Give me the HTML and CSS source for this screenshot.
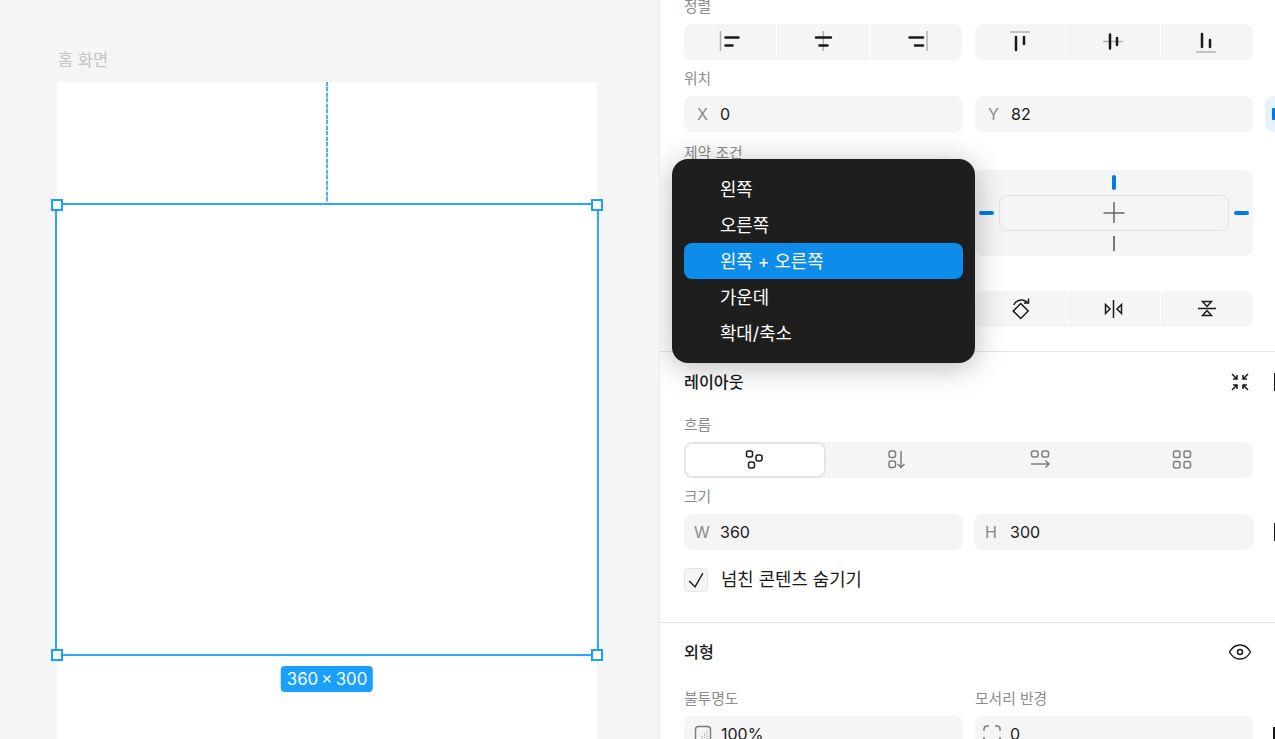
FILE: index.html
```html
<!DOCTYPE html>
<html lang="ko">
<head>
    <meta charset="utf-8">
    <title>홈 화면</title>
    <link rel="stylesheet" href="styles.css">
</head>
<body>
    <div class="canvas">
        <div class="frame-name">홈 화면</div>
        <div class="frame">
            <div class="guide"></div>
            <div class="selection">
                <span class="handle tl"></span>
                <span class="handle tr"></span>
                <span class="handle bl"></span>
                <span class="handle br"></span>
                <div class="size-badge">360 × 300</div>
            </div>
        </div>
    </div>

    <div class="panel">
        <div class="section first">
            <div class="label">정렬</div>
            <div class="align-row">
                <div class="seg-group">
                    <div class="seg"><svg class="ico" viewBox="0 0 24 24"><path class="thin" d="M2.5 1v20"/><path class="bar" d="M7.5 7.5h13M7.5 15.5h7"/></svg></div>
                    <div class="seg"><svg class="ico" viewBox="0 0 24 24"><path class="thin" d="M12.3 1v20"/><path class="bar" d="M5 7.5h15M8.5 15.5h8"/></svg></div>
                    <div class="seg"><svg class="ico" viewBox="0 0 24 24"><path class="thin" d="M23 1v20"/><path class="bar" d="M5.5 7.5h13.500M11 15.500h8"/></svg></div>
                </div>
                <div class="seg-group">
                    <div class="seg"><svg class="ico" viewBox="0 0 24 24"><path class="thin" d="M1 2h20"/><path class="bar" d="M7 7v13M15 7v7"/></svg></div>
                    <div class="seg"><svg class="ico" viewBox="0 0 24 24"><path class="thin" d="M1 11.500h20"/><path class="bar" d="M8 4.500v14M15 8v7"/></svg></div>
                    <div class="seg"><svg class="ico" viewBox="0 0 24 24"><path class="thin" d="M1 22h20"/><path class="bar" d="M7 4v13M15 10v7"/></svg></div>
                </div>
            </div>

            <div class="label">위치</div>
            <div class="field-row">
                <div class="field"><span class="axis">X</span><span>0</span></div>
                <div class="field"><span class="axis">Y</span><span>82</span></div>
                <div class="lock-btn"><span class="lock-mark"></span></div>
            </div>

            <div class="label constraint-label">제약 조건</div>
            <div class="constraint-row">
                <div class="constraint"></div>
                <div class="constraint">
                    <span class="tick top"></span>
                    <span class="tick left"></span>
                    <div class="constraint-box">
                        <svg class="plus" viewBox="0 0 22 22"><path d="M11 0v21M0.500 11h21"/></svg>
                    </div>
                    <span class="tick right"></span>
                    <span class="tick bottom"></span>
                </div>
            </div>

            <div class="label transform-label">변형</div>
            <div class="align-row">
                <div class="seg-group">
                    <div class="seg"></div>
                    <div class="seg"></div>
                    <div class="seg"></div>
                </div>
                <div class="seg-group">
                    <div class="seg"><svg class="ico" viewBox="0 0 24 24"><path class="line" d="M11.700 6.500l7.500 7.500-7.500 7.500-7.500-7.500z"/><path class="line" d="M4.800 8C6.500 3.500 14 .5 19 6M19.500 1.500V6H15"/></svg></div>
                    <div class="seg"><svg class="ico" viewBox="0 0 24 24"><path class="line" d="M11.500 3v18"/><path class="line" d="M3.500 7.500v9l4.500-4.500zM19.500 7.500v9l-4.500-4.500z"/></svg></div>
                    <div class="seg"><svg class="ico" viewBox="0 0 24 24"><path class="line" d="M3 11.500h18"/><path class="line" d="M7.500 4.500h9l-4.500 5zM7.500 18.500h9l-4.500-5z"/></svg></div>
                </div>
            </div>
        </div>

        <div class="section layout">
            <div class="section-head">
                <span class="section-title">레이아웃</span>
                <svg class="head-ico" viewBox="0 0 20 20"><path class="line" d="M2 2l5 5M7 3v4h-4M18 2l-5 5M13 3v4h4M2 18l5-5M7 17v-4h-4M18 18l-5-5M13 17v-4h4"/></svg>
                <span class="edge-mark"></span>
            </div>
            <div class="label">흐름</div>
            <div class="flow-tabs">
                <div class="flow-tab active">
                    <svg class="ico" viewBox="0 0 24 24"><g class="line"><rect x="3.500" y="3" width="6" height="6" rx="2"/><rect x="13" y="7" width="6" height="6" rx="2"/><rect x="5.500" y="14" width="6" height="6" rx="2"/></g></svg>
                </div>
                <div class="flow-tab">
                    <svg class="ico" viewBox="0 0 24 24"><g class="line grey"><rect x="4" y="3" width="6.500" height="6.500" rx="2"/><rect x="4" y="13" width="6.500" height="6.500" rx="2"/><path d="M16 3v16.500M12.500 16l3.500 3.500 3.500-3.500"/></g></svg>
                </div>
                <div class="flow-tab">
                    <svg class="ico" viewBox="0 0 24 24"><g class="line grey"><rect x="3.500" y="3" width="6.500" height="6" rx="2"/><rect x="14" y="3" width="6.500" height="6" rx="2"/><path d="M3 16h18M17.500 12.500l3.500 3.500-3.500 3.500"/></g></svg>
                </div>
                <div class="flow-tab">
                    <svg class="ico" viewBox="0 0 24 24"><g class="line grey"><rect x="3.500" y="3" width="6.500" height="6.500" rx="2"/><rect x="14" y="3" width="6.500" height="6.500" rx="2"/><rect x="3.500" y="13.500" width="6.500" height="6.500" rx="2"/><rect x="14" y="13.500" width="6.500" height="6.500" rx="2"/></g></svg>
                </div>
            </div>

            <div class="label">크기</div>
            <div class="field-row size-row">
                <div class="field"><span class="axis wide">W</span><span>360</span></div>
                <div class="field"><span class="axis height">H</span><span>300</span></div>
                <span class="edge-mark"></span>
            </div>

            <div class="check-row">
                <span class="checkbox"><svg viewBox="0 0 24 24"><path class="check" d="M4.500 13l6.500 6.500 8.500-15"/></svg></span>
                <span class="check-text">넘친 콘텐츠 숨기기</span>
            </div>
        </div>

        <div class="section look">
            <div class="section-head">
                <span class="section-title">외형</span>
                <svg class="head-ico eye" viewBox="0 0 24 24"><path class="line" d="M1.500 12c2.500-4.500 6-7 10.500-7s8 2.500 10.500 7c-2.500 4.500-6 7-10.500 7s-8-2.500-10.500-7z"/><circle class="line" cx="12" cy="12" r="2.500"/></svg>
            </div>
            <div class="look-labels">
                <div class="label">불투명도</div>
                <div class="label">모서리 반경</div>
            </div>
            <div class="field-row">
                <div class="field">
                    <svg class="field-ico" viewBox="0 0 18 18"><rect class="line grey" x="1.500" y="1.500" width="15" height="15" rx="3"/><path class="dots" d="M13 5v9M10.500 8v6M8 11v3"/></svg>
                    <span>100%</span>
                </div>
                <div class="field">
                    <svg class="field-ico corner" viewBox="0 0 18 18"><path class="line grey" d="M1 6V4a3 3 0 0 1 3-3h2M12 1h2a3 3 0 0 1 3 3v2M17 12v2a3 3 0 0 1-3 3h-2M6 17H4a3 3 0 0 1-3-3v-2"/></svg>
                    <span>0</span>
                </div>
                <span class="edge-mark"></span>
            </div>
        </div>

        <div class="menu">
            <div class="menu-item">왼쪽</div>
            <div class="menu-item">오른쪽</div>
            <div class="menu-item selected">왼쪽 + 오른쪽</div>
            <div class="menu-item">가운데</div>
            <div class="menu-item">확대/축소</div>
        </div>
    </div>
</body>
</html>
```

FILE: styles.css
```css
* {
    box-sizing: border-box;
}
html, body {
    height: 100%;
}
body {
    margin: 0;
    display: flex;
    overflow: hidden;
    font-family: Inter, 'Noto Sans CJK KR', sans-serif;
    font-size: 16px;
    color: #1a1a1a;
    background: #fff;
}

/* canvas */
.canvas {
    flex: 0 0 659px;
    display: flex;
    flex-direction: column;
    padding-left: 57px;
    background: #f5f5f5;
}
.frame-name {
    height: 82px;
    padding-top: 48px;
    padding-left: 1px;
    line-height: 24px;
    font-size: 16.500px;
    color: #c4c4c4;
}
.frame {
    position: relative;
    flex: 1;
    width: 540px;
    background: #fff;
}
.guide {
    position: absolute;
    left: 269px;
    top: 0;
    width: 2px;
    height: 121px;
    background: repeating-linear-gradient(to bottom, #4db2fc 0, #4db2fc 4px, #cfeafe 4px, #cfeafe 5.500px);
}
.selection {
    position: absolute;
    left: -2px;
    top: 121px;
    width: 544px;
    height: 453px;
    border: 2px solid #2aa7fb;
}
.handle {
    position: absolute;
    width: 12px;
    height: 12px;
    background: #fff;
    border: 2px solid #18a0fb;
}
.handle.tl { left: -6px; top: -6px; }
.handle.tr { right: -6px; top: -6px; }
.handle.bl { left: -6px; bottom: -7px; }
.handle.br { right: -6px; bottom: -7px; }
.size-badge {
    position: absolute;
    left: 50%;
    top: 100%;
    transform: translateX(-50%);
    margin-top: 12px;
    padding: 0 6px;
    height: 26px;
    line-height: 26px;
    border-radius: 4px;
    white-space: nowrap;
    word-spacing: -1.500px;
    background: #18a0fb;
    color: #fff;
    font-size: 16.800px;
}

/* right panel */
.panel {
    position: relative;
    flex: 1;
    overflow: hidden;
    border-left: 1px solid #e8e8e8;
}
.section {
    padding: 0 0 0 24px;
    border-bottom: 1px solid #e6e6e6;
}
.section.first {
    margin-top: -12px;
    padding-bottom: 24px;
}
.section.layout {
    padding-top: 12px;
    padding-bottom: 30px;
}
.section.look {
    padding-top: 11px;
    border-bottom: 0;
}
.label {
    height: 36px;
    line-height: 38px;
    font-size: 14.800px;
    color: #8c8c8c;
}
.constraint-label {
    height: 38px;
    line-height: 42px;
}
.transform-label {
    height: 35px;
}
.align-row {
    display: grid;
    grid-template-columns: 278px 278px;
    gap: 13px;
}
.seg-group {
    display: flex;
    gap: 1.500px;
    height: 36px;
    border-radius: 8px;
    overflow: hidden;
}
.seg {
    flex: 1;
    display: flex;
    align-items: center;
    justify-content: center;
    background: #f5f5f5;
}
.ico {
    width: 24px;
    height: 24px;
    overflow: visible;
}
.thin {
    fill: none;
    stroke: #b0b0b0;
    stroke-width: 1.500;
}
.bar {
    fill: none;
    stroke: #1a1a1a;
    stroke-width: 2.500;
    stroke-linecap: round;
}
.line {
    fill: none;
    stroke: #1a1a1a;
    stroke-width: 1.500;
}
.line.grey {
    stroke: #7d7d7d;
}
.dots {
    fill: none;
    stroke: #9a9a9a;
    stroke-width: 1;
    stroke-dasharray: 1 1;
}

.field-row {
    display: grid;
    grid-template-columns: 279px 278px 36px;
    gap: 12px;
}
.size-row {
    grid-template-columns: 279px 280px 36px;
    gap: 11px;
}
.size-row .edge-mark {
    margin-left: 9px;
}
.look .edge-mark {
    align-self: start;
    height: 12px;
    margin: 11px 0 0 8px;
}
.field {
    display: flex;
    align-items: center;
    height: 36px;
    padding-left: 13px;
    background: #f5f5f5;
    border-radius: 8px;
    line-height: 36px;
}
.axis {
    width: 23px;
    color: #8a8a8a;
}
.axis.wide {
    width: 26px;
    margin-left: -3px;
}
.axis.height {
    width: 25px;
    margin-left: -2px;
}
.lock-btn {
    display: flex;
    align-items: center;
    height: 36px;
    padding-left: 7px;
    background: #e5f2ff;
    border-radius: 8px;
}
.lock-mark {
    width: 4px;
    height: 12px;
    border-radius: 1px;
    background: #007be5;
}
.edge-mark {
    display: block;
    align-self: center;
    width: 2px;
    height: 18px;
    background: #1a1a1a;
}
.field-ico {
    flex: none;
    width: 18px;
    height: 18px;
    margin-right: 9px;
    margin-left: -3px;
}
.field-ico.corner {
    margin-left: -5px;
}

/* constraint picker */
.constraint-row {
    display: grid;
    grid-template-columns: 278px 278px;
    gap: 13px;
}
.constraint {
    position: relative;
    height: 86px;
    background: #f5f5f5;
    border-radius: 8px;
}
.constraint-box {
    position: absolute;
    left: 24px;
    right: 24px;
    top: 25px;
    height: 36px;
    display: flex;
    align-items: center;
    justify-content: center;
    border: 1px solid #e2e2e2;
    border-radius: 8px;
}
.plus {
    width: 22px;
    height: 22px;
    fill: none;
    stroke: #666;
    stroke-width: 1.500;
}
.tick {
    position: absolute;
    border-radius: 2px;
    background: #007be5;
}
.tick.top {
    left: 137px;
    top: 5px;
    width: 4px;
    height: 15px;
}
.tick.left {
    left: 4px;
    top: 41px;
    width: 15px;
    height: 4px;
}
.tick.right {
    right: 4px;
    top: 41px;
    width: 15px;
    height: 4px;
}
.tick.bottom {
    left: 138px;
    top: 66px;
    width: 2px;
    height: 15px;
    border-radius: 0;
    background: #777;
}

/* section heads */
.section-head {
    display: flex;
    align-items: center;
    height: 36px;
}
.section-title {
    flex: 1;
    font-size: 16.200px;
    font-weight: 500;
    line-height: 34px;
}
.look .section-title {
    line-height: 36px;
}
.head-ico {
    width: 20px;
    height: 20px;
    margin-right: 24px;
    overflow: visible;
}
.section-head .edge-mark {
    margin-right: -1px;
}
.head-ico.eye {
    width: 24px;
    height: 24px;
    margin-right: 23px;
}
.look .section-head {
    margin-bottom: 10px;
}
.layout .section-head {
    margin-bottom: 6px;
}
.look-labels {
    display: grid;
    grid-template-columns: 279px 278px;
    gap: 12px;
}

/* flow tabs */
.flow-tabs {
    display: grid;
    grid-template-columns: repeat(4, 1fr);
    width: 569px;
    height: 36px;
    background: #f5f5f5;
    border-radius: 8px;
}
.flow-tab {
    display: flex;
    align-items: center;
    justify-content: center;
}
.flow-tab.active {
    background: #fff;
    border: 2px solid #e6e6e6;
    border-radius: 8px;
}

.check-row {
    display: flex;
    align-items: center;
    gap: 13px;
    height: 24px;
    margin-top: 18px;
    font-size: 17.800px;
}
.check-text {
    margin-top: -5px;
}
.checkbox {
    width: 24px;
    height: 24px;
    background: #f5f5f5;
    border: 1px solid #e4e4e4;
    border-radius: 6px;
}
.checkbox svg {
    display: block;
    width: 22px;
    height: 22px;
}
.check {
    fill: none;
    stroke: #1a1a1a;
    stroke-width: 1.500;
}

/* dropdown */
.menu {
    position: absolute;
    left: 12px;
    top: 159px;
    width: 303px;
    padding: 12px;
    background: #1e1e1e;
    border-radius: 16px;
    box-shadow: 0 4px 30px rgba(0, 0, 0, 0.28);
}
.menu-item {
    height: 36px;
    line-height: 38px;
    padding-left: 36px;
    border-radius: 8px;
    color: #fff;
    font-size: 17.800px;
}
.menu-item.selected {
    background: #0d8ce9;
}
```
